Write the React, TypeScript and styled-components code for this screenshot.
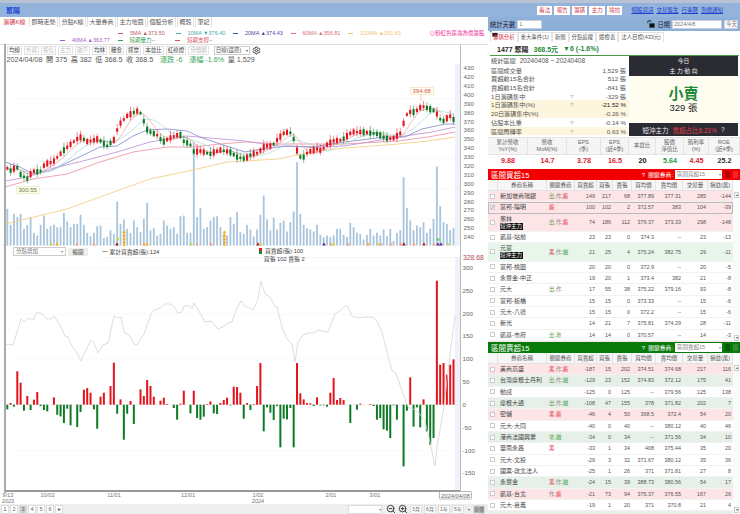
import React from "react";
import styled, { createGlobalStyle } from "styled-components";
import { Settings, ZoomIn, ZoomOut } from "lucide-react";

const GlobalStyle = createGlobalStyle`
  html, body { margin: 0; padding: 0; background: #fff; }
  body { font-family: "Liberation Sans", "Noto Sans CJK TC", sans-serif; color: #333; }
  * { box-sizing: border-box; }
`;

// ---------- chart data (page pixels, read off the picture) ----------
const CENTERS: [number, number][] = [
  [7, 169], [10, 172], [17, 168], [20, 175], [27, 180], [33, 172], [40, 173], [45, 165], [53, 163], [63, 152], [72, 144], [80, 138],
  [88, 143], [98, 140], [107, 147], [115, 140], [117, 132], [118, 127], [127, 117], [137, 112], [142, 115], [145, 127], [148, 132],
  [157, 136], [163, 143], [170, 139], [180, 135], [183, 142], [190, 145], [194, 153], [200, 152], [210, 155], [220, 151], [230, 153],
  [237, 158], [245, 160], [252, 155], [258, 154], [265, 147], [272, 147], [278, 140], [285, 133], [292, 134], [298, 155], [302, 160],
  [308, 153], [317, 150], [322, 152], [325, 147], [333, 142], [342, 141], [352, 133], [362, 133], [378, 135], [385, 139], [392, 140],
  [400, 135], [405, 120], [408, 113], [415, 113], [422, 107], [435, 112], [442, 123], [450, 117], [455, 122],
];
const MA120 = "5,225 67,210 100,198 150,180 193,171 227,163 245,162 278,160 312,153 345,149 398,145 428,142 455,138";
const MA60 = "5,188 33,180 67,175 100,163 133,153 167,148 193,148 220,145 245,143 278,145 312,145 345,145 398,142 428,138 455,133";
const MA40 = "5,182 27,178 50,170 83,162 117,153 150,143 187,137 245,142 278,147 312,148 345,147 398,138 432,133 455,128";
const MA20 = "5,163 20,168 33,175 50,172 75,160 100,148 117,147 133,137 147,131 167,130 187,132 200,138 220,145 245,153 262,150 288,147 312,148 345,143 385,138 405,138 422,130 445,125 455,125";

const VOLUMES = [
  110, 62, 95, 85, 95, 50, 62, 85, 38, 30, 62, 90, 50, 58, 62, 55, 55, 98, 72, 55, 65, 65, 92, 62, 38, 28, 38, 58, 60, 22, 25, 45, 35, 132, 65,
  78, 50, 38, 75, 55, 40, 80, 128, 45, 52, 30, 35, 75, 60, 50, 55, 35, 88, 90, 38, 38, 310, 85, 112, 50, 55, 75, 85, 88, 55, 35, 30, 85, 65, 100,
  40, 35, 62, 48, 27, 48, 92, 150, 78, 45, 84, 48, 68, 75, 42, 70, 102, 250, 95, 62, 52, 48, 42, 62, 32, 25, 30, 25, 30, 50, 50, 32, 26, 68, 55,
  38, 34, 18, 32, 50, 30, 38, 30, 48, 28, 50, 14, 38, 46, 205, 112, 75, 46, 60, 55, 70, 38, 50, 80, 237, 118, 70, 65, 46, 52,
];
const NET = [
  -14, 5, -6, 100, 66, -18, 26, -16, 15, 38, -4, -16, -20, 0, 22, -30, -35, -55, -12, -62, 0, -67, -22, 45, 50, 36, -14, -72, 24, 36, 0, 56, 126,
  -27, 16, -105, -27, 11, -58, 0, 46, 26, 74, 56, 24, 0, 12, 21, 2, 0, -10, -45, 3, 42, 0, -26, 42, -40, -45, -36, 2, 10, -26, -28, 5, 14, 21, -2,
  54, 53, 36, -42, 5, -16, 2, 56, 125, -80, -8, -24, -46, -4, -128, -42, -44, -10, -128, 125, 34, 16, 5, 4, -4, 22, -2, -2, -6, 36, 80, 14, 20, 14,
  0, -55, 0, -15, 3, 0, 0, 2, -4, -45, -40, -74, -78, -100, -2, -45, 0, -185, -18, 82, -66, -8, -68, 16, -80, -120, -100, 372, 120, 125, 90, 120, 136,
];
const NET_LINE = "5,345 13,346 21,320 24,323 28,319 33,321 37,313 42,315 47,320 51,320 54,317 60,326 65,337 68,338 72,347 76,352 81,362 85,353 91,341 94,344 98,354 103,346 108,344 114,317 117,319 121,318 124,333 130,337 135,346 137,346 144,335 151,315 154,311 160,309 165,305 170,305 174,307 178,314 182,313 184,307 190,307 192,310 194,304 200,314 205,323 211,322 218,330 224,327 228,324 232,323 237,309 241,302 245,308 248,308 253,311 258,300 261,282 265,295 270,298 275,308 277,308 282,328 287,340 292,345 295,363 298,343 303,336 308,334 314,334 318,331 323,332 328,333 335,315 340,312 345,307 348,308 352,317 358,319 365,318 373,318 377,322 382,333 387,353 392,372 395,373 398,380 403,395 408,408 413,410 418,413 425,422 430,443 435,467 437,447 442,420 445,400 447,380 455,317";

const SIGNALS: [number, string][] = [
  [5, "#f7a090"], [51, "#b5d85a"], [57, "#f5b020"], [77, "#f7a090"], [94, "#f7a090"], [117, "#a01818"], [144, "#f5a060"], [147, "#f5b020"],
  [191, "#b5d85a"], [197, "#f7a090"], [211, "#f7a090"], [258, "#cc2020"], [261, "#c8d850"], [324, "#6b2a8a"], [331, "#f5a060"], [334, "#c8d850"],
  [348, "#f7a090"], [368, "#f5b020"], [378, "#c8d850"], [381, "#f7a090"], [391, "#f7a090"], [401, "#f7a090"], [404, "#a01818"], [414, "#f7a090"],
  [424, "#cc2020"], [434, "#f7a090"], [438, "#6b2a8a"], [441, "#6b2a8a"], [448, "#c8d850"],
];

const barX = (i: number) => 7.3 + i * 3.33;
const centerAt = (x: number) => {
  for (let i = 1; i < CENTERS.length; i++) {
    const [x0, y0] = CENTERS[i - 1];
    const [x1, y1] = CENTERS[i];
    if (x <= x1) return y0 + ((y1 - y0) * (x - x0)) / (x1 - x0);
  }
  return CENTERS[CENTERS.length - 1][1];
};
const CLOSES = VOLUMES.map((_, i) => centerAt(barX(i)));
const movingAverage = (n: number) =>
  CLOSES.map((_, i) => {
    const part = CLOSES.slice(Math.max(0, i - n + 1), i + 1);
    return `${barX(i).toFixed(1)},${(part.reduce((a, b) => a + b, 0) / part.length).toFixed(1)}`;
  }).join(" ");

// ---------- layout ----------
const Page = styled.div`
  width: 740px;
  height: 514px;
  overflow: hidden;
  display: flex;
  flex-direction: column;
`;
const TitleBar = styled.header`
  height: 17px;
  flex: none;
  border-top: 3px solid #b7c3d4;
  background: #93b3da;
  display: flex;
  align-items: center;
  padding: 0 6px;
`;
const StockName = styled.span`
  color: #1a3fd8;
  font-size: 7px;
  font-weight: bold;
`;
const TitleActions = styled.div`
  margin-left: auto;
  display: flex;
  gap: 2px;
  margin-right: 9px;
`;
const TitleButton = styled.span`
  background: #fff;
  color: #c8384c;
  font-size: 5.5px;
  line-height: 9px;
  text-align: center;
  width: 15.5px;
  white-space: nowrap;
`;
const TitleLinks = styled.div`
  display: flex;
  gap: 3px;
  margin-right: 11px;
`;
const TitleLink = styled.span`
  color: #1b3fd0;
  font-size: 5.5px;
  text-decoration: underline;
  white-space: nowrap;
`;
const Body = styled.div`
  flex: 1;
  display: flex;
  min-height: 0;
`;
const LeftPane = styled.section`
  width: 488px;
  flex: none;
  display: flex;
  flex-direction: column;
`;
const TabRow = styled.nav`
  height: 10px;
  flex: none;
  display: flex;
  gap: 1px;
  padding-left: 1px;
`;
const Tab = styled.span<{ $active?: boolean }>`
  color: ${(p) => (p.$active ? "#d8333f" : "#555")};
  font-size: 6px;
  line-height: 10px;
  padding: 0 1.5px;
  border: 1px solid ${(p) => (p.$active ? "transparent" : "#e0e0e0")};
  border-width: 0 1px;
  white-space: nowrap;
`;
const Legend = styled.div`
  height: 17px;
  flex: none;
  padding-top: 2px;
`;
const LegendLine = styled.div<{ $indent: number }>`
  height: 7px;
  display: flex;
  align-items: center;
  padding-left: ${(p) => p.$indent}px;
`;
const LegendItem = styled.span<{ $color: string }>`
  width: 57.5px;
  flex: none;
  color: ${(p) => p.$color};
  font-size: 5.5px;
  white-space: nowrap;
  &::before {
    content: "";
    display: inline-block;
    width: 5px;
    height: 1px;
    background: currentColor;
    vertical-align: middle;
    margin-right: 7px;
  }
`;
const PinkNote = styled.span`
  color: #f02e9a;
  font-size: 5.5px;
  margin-left: 24px;
  white-space: nowrap;
`;
const LockIcon = styled.svg`
  margin-left: 5px;
  flex: none;
`;
const ChartFrame = styled.div`
  flex: 1;
  position: relative;
  display: flex;
  flex-direction: column;
  border-top: 1px solid #ddd;
  min-height: 0;
  &::before {
    content: "";
    position: absolute;
    left: 4px;
    top: -1px;
    height: 449px;
    width: 1.5px;
    background: #aaa;
  }
  &::after {
    content: "";
    position: absolute;
    left: 460px;
    top: 0;
    height: 447px;
    width: 1px;
    background: #bbb;
  }
`;
const ChartToolbar = styled.div`
  height: 11px;
  flex: none;
  display: flex;
  align-items: center;
  gap: 2px;
  padding-left: 7px;
`;
const ToolButton = styled.span<{ $muted?: boolean }>`
  height: 9px;
  border: 1px solid #e2e2e2;
  color: ${(p) => (p.$muted ? "#bbb" : "#444")};
  font-size: 5.5px;
  line-height: 7px;
  padding: 0 1px;
  white-space: nowrap;
`;
const ToolSelect = styled.span`
  height: 9px;
  width: 36px;
  margin-left: 3px;
  border: 1px solid #ccc;
  color: #555;
  font-size: 5.5px;
  line-height: 7px;
  padding-left: 1px;
  position: relative;
  &::after {
    content: "▾";
    position: absolute;
    right: 1px;
    font-size: 4px;
  }
`;
const InfoLine = styled.div`
  height: 8px;
  flex: none;
  padding-left: 6.5px;
  display: flex;
  gap: 3.5px;
  font-size: 7.2px;
  line-height: 8px;
  color: #555;
  white-space: nowrap;
`;
const GreenText = styled.span`
  color: #3aa65a;
  margin-left: 3px;
`;
const PriceSvg = styled.svg`
  display: block;
  flex: none;
`;
const SubControls = styled.div`
  height: 11px;
  flex: none;
  display: flex;
  align-items: center;
  padding-left: 13px;
`;
const SubSelect = styled.span`
  width: 53px;
  height: 8.5px;
  border: 1px solid #ccc;
  font-size: 5.5px;
  line-height: 7px;
  color: #777;
  padding-left: 2px;
  position: relative;
  &::after {
    content: "▾";
    position: absolute;
    right: 2px;
    font-size: 4px;
  }
`;
const SubButton = styled.span`
  width: 20px;
  height: 8px;
  margin-left: 2px;
  background: #eee;
  font-size: 5.5px;
  line-height: 8px;
  text-align: center;
  color: #444;
`;
const SubLegend = styled.span`
  font-size: 5.8px;
  color: #444;
  margin-left: 14px;
`;
const TradeDot = styled.span`
  display: inline-block;
  width: 3px;
  height: 6px;
  background: linear-gradient(#d22 50%, #1a8a2a 50%);
  margin-right: 3px;
  vertical-align: -1px;
`;
const TradeLegend = styled.span`
  position: absolute;
  left: 259px;
  top: 203px;
  font-size: 5.8px;
  line-height: 7.8px;
  color: #444;
  white-space: nowrap;
`;
const PeakLabel = styled.span`
  position: absolute;
  left: 463px;
  top: 209px;
  font-size: 6.8px;
  line-height: 8px;
  color: #b04848;
`;
const BottomBar = styled.footer`
  height: 10px;
  flex: none;
  background: #eee;
  display: flex;
  align-items: flex-start;
  padding: 0.5px 0 0 1px;
  gap: 1px;
`;
const PageNum = styled.span<{ $active?: boolean }>`
  width: 8px;
  height: 9px;
  text-align: center;
  background: ${(p) => (p.$active ? "#ccc" : "#fff")};
  border: 1px solid #ddd;
  color: #666;
  font-size: 5.6px;
  line-height: 7px;
`;
const BottomRight = styled.div`
  margin-left: auto;
  display: flex;
  align-items: flex-start;
  gap: 2px;
  margin-right: 3px;
`;
const RangeInput = styled.span`
  width: 34px;
  height: 9px;
  margin-right: 2px;
  background: #fff;
  border: 1px solid #ddd;
  color: #888;
  font-size: 4px;
  line-height: 7px;
  text-align: right;
`;
const IconSlot = styled.span`
  width: 10px;
  height: 9px;
  display: flex;
  align-items: center;
  justify-content: center;
  color: #222;
`;
const RangeButton = styled.span<{ $strong?: boolean }>`
  height: 9px;
  width: 12px;
  text-align: center;
  background: ${(p) => (p.$strong ? "#bbb" : "#fff")};
  border: 1px solid #ddd;
  color: #666;
  font-size: 5px;
  line-height: 7px;
`;
const RangeCaret = styled.span`
  width: 5px;
  color: #666;
  font-size: 4px;
  line-height: 9px;
  text-align: center;
`;

// ---------- right pane ----------
const RightPane = styled.aside`
  flex: 1;
  min-width: 0;
  display: flex;
  flex-direction: column;
`;
const StatBar = styled.div`
  height: 14px;
  flex: none;
  background: #8db0d8;
  display: flex;
  align-items: center;
  padding: 0 2px;
  gap: 2px;
  font-size: 6.3px;
  color: #223;
`;
const FieldBox = styled.span<{ $w: number }>`
  width: ${(p) => p.$w}px;
  height: 9px;
  background: #fff;
  border: 1px solid #ccd;
  font-size: 5.5px;
  line-height: 7px;
  color: #777;
  padding-left: 1px;
`;
const Spacer = styled.span`
  flex: 1;
`;
const RightTabs = styled.nav`
  height: 11px;
  flex: none;
  display: flex;
  padding: 1px 0 0 2px;
`;
const RightTab = styled.span<{ $active?: boolean }>`
  font-size: 5.4px;
  line-height: 9px;
  padding: 0 2px;
  border: 1px solid #e2e2e2;
  border-bottom: 0;
  white-space: nowrap;
  color: ${(p) => (p.$active ? "#d8333f" : "#555")};
`;
const QuoteLine = styled.div`
  height: 14px;
  flex: none;
  margin: 0 1px 0 2px;
  border-bottom: 1.5px solid #4a9a4a;
  display: flex;
  align-items: center;
  padding-left: 7px;
  font-size: 7px;
  font-weight: bold;
  color: #222;
  white-space: nowrap;
`;
const QuotePrice = styled.span`
  color: #1f8a3a;
  margin-left: 5px;
`;
const StatsArea = styled.div`
  height: 80px;
  flex: none;
  display: flex;
  margin-left: 2px;
`;
const StatsList = styled.div`
  width: 139px;
  flex: none;
  padding-top: 1px;
`;
const StatsHeadRow = styled.div`
  height: 8.7px;
  padding-left: 1px;
  line-height: 8.7px;
  font-size: 6.2px;
  color: #555;
  white-space: nowrap;
`;
const StatsRange = styled.span`
  font-size: 6.5px;
  margin-left: 4px;
`;
const StatsRow = styled.div<{ $hl?: boolean }>`
  height: 8.7px;
  display: grid;
  grid-template-columns: 79px 1fr auto;
  align-items: center;
  padding: 0 3px 0 1px;
  background: ${(p) => (p.$hl ? "#fdf6dc" : "transparent")};
  font-size: 6.2px;
  color: #555;
  white-space: nowrap;
`;
const StatsMark = styled.span`
  color: #aaa;
`;
const StatsValue = styled.span<{ $strong?: boolean }>`
  color: ${(p) => (p.$strong ? "#222" : "#555")};
`;
const DirectionCard = styled.div`
  flex: 1;
  margin-right: 2px;
  display: flex;
  flex-direction: column;
  background: #fffdf0;
`;
const CardHead = styled.div`
  height: 20px;
  flex: none;
  background: #2b2b33;
  color: #eee;
  font-size: 5.8px;
  line-height: 9.5px;
  text-align: center;
  padding-top: 1px;
`;
const CardBody = styled.div`
  flex: 1;
  display: flex;
  flex-direction: column;
  align-items: center;
  justify-content: center;
`;
const CardBig = styled.div`
  color: #1f8a3a;
  font-size: 15px;
  line-height: 17px;
  font-weight: bold;
`;
const CardSub = styled.div`
  font-size: 9.5px;
  line-height: 12px;
  color: #222;
`;
const CardFoot = styled.div`
  height: 13px;
  flex: none;
  background: #2b2b33;
  color: #eee;
  font-size: 6.5px;
  display: flex;
  align-items: center;
  justify-content: center;
  gap: 4px;
  white-space: nowrap;
`;
const Warn = styled.span`
  color: #e8404a;
`;
const MetricGrid = styled.div`
  height: 29px;
  flex: none;
  display: grid;
  grid-template-columns: 40px 39px 34px 28px 27px 28px 25px 31px;
  grid-template-rows: 18px 11px;
  margin: 1px 0 3px;
`;
const MetricHead = styled.div`
  background: #f5f5f5;
  border: 1px solid #e4e4e4;
  border-width: 1px 1px 1px 0;
  color: #666;
  font-size: 5.5px;
  line-height: 7.5px;
  text-align: center;
  display: flex;
  align-items: center;
  justify-content: center;
`;
const MetricValue = styled.div<{ $color: string }>`
  color: ${(p) => p.$color};
  font-size: 7.2px;
  font-weight: bold;
  line-height: 11px;
  text-align: center;
`;
const PanelBar = styled.div<{ $bg: string }>`
  height: 11px;
  flex: none;
  background: ${(p) => p.$bg};
  color: #fff;
  display: flex;
  align-items: center;
  padding: 0 2px 0 3px;
  font-size: 5.8px;
  white-space: nowrap;
`;
const PanelTitle = styled.span`
  font-size: 7.5px;
`;
const PanelSelect = styled.span`
  width: 47px;
  height: 9px;
  background: #fff;
  color: #888;
  font-size: 5.5px;
  line-height: 9px;
  padding-left: 2px;
  margin-left: 2px;
  position: relative;
  &::after {
    content: "▾";
    position: absolute;
    right: 1px;
    font-size: 4px;
  }
`;
const PanelSquare = styled.span<{ $bg: string }>`
  width: 5px;
  height: 7px;
  margin-left: 3px;
  background: ${(p) => p.$bg};
`;
const GRID = "10px 49px 28px 22px 16px 19px 24px 27px 25px 25px";
const HeadRow = styled.div`
  height: 11px;
  flex: none;
  width: 245px;
  display: grid;
  grid-template-columns: ${GRID};
  background: #f6f6f6;
`;
const HeadCell = styled.div`
  border: 1px solid #e2e2e2;
  border-width: 0 1px 1px 0;
  color: #555;
  font-size: 5.5px;
  line-height: 10px;
  text-align: center;
  white-space: nowrap;
`;
const Rows = styled.div<{ $h: number }>`
  height: ${(p) => p.$h}px;
  flex: none;
  position: relative;
  overflow: hidden;
`;
const TONES: Record<string, string> = { pink: "#fde4e6", green: "#e8f5ea", sage: "#e7f0e8", none: "#fff" };
const Row = styled.div<{ $tone: string; $tall?: boolean; $boxed?: boolean }>`
  width: 245px;
  height: ${(p) => (p.$tall ? 18.3 : 11.33)}px;
  display: grid;
  grid-template-columns: ${GRID};
  background: ${(p) => TONES[p.$tone]};
  border-bottom: 1px solid ${(p) => (p.$boxed ? "#aaa" : "#f2f2f2")};
  ${(p) => (p.$boxed ? "outline: 1px solid #bbb; outline-offset: -1px;" : "")}
  align-items: center;
  font-size: 5.6px;
  color: #555;
`;
const CheckCell = styled.span<{ $on?: boolean }>`
  width: 5px;
  height: 5px;
  margin-left: 2px;
  background: #fff;
  border: 1px solid #ccc;
  font-size: 4.5px;
  line-height: 4px;
  color: #333;
`;
const NameCell = styled.div`
  padding-left: 2px;
  font-size: 6px;
  line-height: 8px;
  color: #444;
  white-space: nowrap;
  overflow: hidden;
`;
const ShortBadge = styled.span`
  display: block;
  width: 23px;
  background: #111;
  color: #fff;
  font-size: 5.5px;
  line-height: 7px;
`;
const KeyCell = styled.div`
  padding-left: 2px;
  font-size: 5.4px;
  white-space: nowrap;
`;
const KeyMark = styled.span<{ $c: string }>`
  color: ${(p) => p.$c};
`;
const NumCell = styled.div`
  text-align: right;
  padding-right: 2px;
  white-space: nowrap;
  font-size: 5.4px;
`;
const ScrollTrack = styled.div`
  position: absolute;
  right: 0;
  top: 0;
  bottom: 0;
  width: 7px;
  background: #fbfbfb;
`;
const ScrollArrow = styled.span<{ $down?: boolean }>`
  position: absolute;
  left: 1px;
  right: 1px;
  ${(p) => (p.$down ? "bottom: 1px;" : "top: 1px;")}
  height: 6px;
  background: #fff;
  border: 1px solid #ccc;
  font-size: 4px;
  line-height: 4px;
  text-align: center;
  color: #555;
`;

// ---------- table data ----------
type Broker = {
  name: string; badge?: boolean; keys?: string; net: number; buy: number; sell: number;
  bavg: string; savg: string; vol: number; pnl: number; tone?: string; checked?: boolean;
};
const BUYERS: Broker[] = [
  { name: "新加坡商瑞銀", keys: "出,作,廝", net: 149, buy: 217, sell: 68, bavg: "377.89", savg: "377.31", vol: 285, pnl: -144, tone: "pink" },
  { name: "富邦-陽明", keys: "廝", net: 100, buy: 102, sell: 2, bavg: "372.57", savg: "383", vol: 104, pnl: -39, tone: "pink", checked: true },
  { name: "奧林", badge: true, keys: "出,作,廝", net: 74, buy: 186, sell: 112, bavg: "379.37", savg: "373.33", vol: 298, pnl: -148, tone: "pink" },
  { name: "凱基-站前", net: 23, buy: 23, sell: 0, bavg: "374.3", savg: "--", vol: 23, pnl: -13 },
  { name: "元富", badge: true, keys: "黑,作,融", net: 21, buy: 25, sell: 4, bavg: "375.24", savg: "382.75", vol: 29, pnl: -11, tone: "green" },
  { name: "富邦-桃園", net: 20, buy: 20, sell: 0, bavg: "372.9", savg: "--", vol: 20, pnl: -5 },
  { name: "永豐金-中正", net: 19, buy: 20, sell: 1, bavg: "373.4", savg: "382", vol: 21, pnl: -8 },
  { name: "元大", keys: "出,作", net: 17, buy: 55, sell: 38, bavg: "375.22", savg: "379.16", vol: 93, pnl: -8 },
  { name: "富邦-板橋", net: 15, buy: 15, sell: 0, bavg: "373.33", savg: "--", vol: 15, pnl: -6 },
  { name: "元大-八德", net: 15, buy: 15, sell: 0, bavg: "372.2", savg: "--", vol: 15, pnl: -6 },
  { name: "新光", net: 14, buy: 21, sell: 7, bavg: "375.81", savg: "374.29", vol: 28, pnl: -11 },
  { name: "凱基-市府", keys: "出,地", net: 14, buy: 14, sell: 0, bavg: "370.57", savg: "--", vol: 14, pnl: -3 },
];
const SELLERS: Broker[] = [
  { name: "美商高盛", keys: "黑,作,廝", net: -187, buy: 15, sell: 202, bavg: "374.51", savg: "374.68", vol: 217, pnl: 116, tone: "pink" },
  { name: "台灣摩根士丹利", keys: "出,作,融", net: -129, buy: 23, sell: 152, bavg: "374.83", savg: "372.12", vol: 175, pnl: 41, tone: "sage" },
  { name: "動感", net: -125, buy: 0, sell: 125, bavg: "--", savg: "379.56", vol: 125, pnl: 138 },
  { name: "摩根大通", keys: "出,作,融", net: -108, buy: 47, sell: 155, bavg: "378", savg: "371.82", vol: 202, pnl: 7, tone: "sage" },
  { name: "密儲", keys: "黑,廝", net: -46, buy: 4, sell: 50, bavg: "368.5", savg: "372.4", vol: 54, pnl: 20, tone: "pink" },
  { name: "元大-大同", net: -40, buy: 0, sell: 40, bavg: "--", savg: "380.12", vol: 40, pnl: 46 },
  { name: "港商法國興業", keys: "地,融", net: -34, buy: 0, sell: 34, bavg: "--", savg: "371.56", vol: 34, pnl: 10, tone: "sage" },
  { name: "華南永昌", keys: "黑", net: -33, buy: 1, sell: 34, bavg: "408", savg: "375.44", vol: 35, pnl: 20 },
  { name: "元大-北投", net: -29, buy: 3, sell: 32, bavg: "371.67", savg: "380.12", vol: 35, pnl: 36 },
  { name: "國票-敦北法人", net: -25, buy: 1, sell: 26, bavg: "371", savg: "371.81", vol: 27, pnl: 8 },
  { name: "永豐金", keys: "黑,作,融", net: -24, buy: 15, sell: 39, bavg: "388.73", savg: "380.56", vol: 54, pnl: 17, tone: "sage" },
  { name: "凱基-台北", keys: "作,廝", net: -21, buy: 73, sell: 94, bavg: "375.37", savg: "376.55", vol: 167, pnl: 26, tone: "pink" },
  { name: "元大-嘉義", net: -19, buy: 1, sell: 20, bavg: "371", savg: "370.8", vol: 21, pnl: 4 },
];
const HEADS = ["券商名稱", "關鍵券商", "買賣超", "買張", "賣張", "買均價", "賣均價", "交易量", "損益(萬)"];
const keyColor = (k: string) => (k === "廝" || k === "黑" ? "#e03040" : k === "融" ? "#2a9a40" : k === "作" ? "#888" : "#6a9a4a");

const BrokerRow = ({ row }: { row: Broker }) => (
  <Row $tone={row.tone ?? "none"} $tall={row.badge} $boxed={row.checked}>
    <CheckCell $on={row.checked}>{row.checked ? "✓" : ""}</CheckCell>
    <NameCell>
      {row.name}
      {row.badge && <ShortBadge>短沖主力</ShortBadge>}
    </NameCell>
    <KeyCell>
      {row.keys?.split(",").map((k, i) => (
        <KeyMark key={i} $c={keyColor(k)}>{i > 0 ? "," : ""}{k}</KeyMark>
      ))}
    </KeyCell>
    <NumCell>{row.net}</NumCell>
    <NumCell>{row.buy}</NumCell>
    <NumCell>{row.sell}</NumCell>
    <NumCell>{row.bavg}</NumCell>
    <NumCell>{row.savg}</NumCell>
    <NumCell>{row.vol}</NumCell>
    <NumCell>{row.pnl}</NumCell>
  </Row>
);

const RowPeek = styled.div<{ $tone: string }>`
  width: 245px;
  height: 3px;
  background: ${(p) => TONES[p.$tone]};
`;

const BrokerPanel = ({ title, bg, rows, height, peek }: { title: string; bg: string; rows: Broker[]; height: number; peek: string }) => (
  <>
    <PanelBar $bg={bg}>
      <PanelTitle>{title}</PanelTitle>
      <Spacer />
      <span>? &nbsp;關鍵券商:</span>
      <PanelSelect>{title}</PanelSelect>
      <PanelSquare $bg="rgba(0,0,0,.25)" />
      <PanelSquare $bg="rgba(255,255,255,.15)" />
    </PanelBar>
    <HeadRow>
      <HeadCell />
      {HEADS.map((h) => <HeadCell key={h}>{h}</HeadCell>)}
    </HeadRow>
    <Rows $h={height}>
      {rows.map((r, i) => <BrokerRow key={i} row={r} />)}
      <RowPeek $tone={peek} />
      <ScrollTrack>
        <ScrollArrow>▴</ScrollArrow>
        <ScrollArrow $down>▾</ScrollArrow>
      </ScrollTrack>
    </Rows>
  </>
);

const LockGlyph = ({ size = 8 }: { size?: number }) => (
  <LockIcon width={size} height={size} viewBox="0 0 10 10">
    <path d="M1 4V2.6a2 2 0 0 1 4 0" fill="none" stroke="#111" strokeWidth="1.1" />
    <rect x="3" y="4.2" width="6.5" height="5.3" fill="#111" />
  </LockIcon>
);

const GRID_PRICE = [100, 130, 160, 190, 220];
const PRICE_TICKS = Array.from({ length: 20 }, (_, i) => 430 - i * 10);

const PriceChart = () => (
  <PriceSvg width={488} height={182} viewBox="0 65 488 182">
    {GRID_PRICE.map((y) => <line key={y} x1={16} x2={460} y1={y} y2={y} stroke="#f3f3f3" strokeWidth={0.6} />)}
    <rect x={455} y={65} width={5} height={182} fill="#eef3f9" />
    {VOLUMES.map((v, i) => (
      <rect key={i} x={barX(i) - 0.9} y={246.5 - v / 3} width={1.8} height={v / 3} fill="#a9c4dd" />
    ))}
    {[0, 1].map((k) => (
      <g key={k}>
        {[0, 1, 2, 3, 4].map((j) => (
          <path key={j} d={`M${k ? 224.5 : 124.2} ${245 - j * 3.4}l-2 2.4h1.2v1h1.6v-1h1.2z`} fill="#f5b020" />
        ))}
      </g>
    ))}
    {SIGNALS.map(([x, c], i) => <path key={i} d={`M${x} 243.2l1.8 3.3h-3.6z`} fill={c} />)}
    <circle cx={438} cy={240.5} r={1.6} fill="#5ce05c" />
    <circle cx={117.5} cy={240} r={1.6} fill="#b5e05c" />
    <polyline points={MA120} fill="none" stroke="#f5d08a" strokeWidth={0.9} />
    <polyline points={MA60} fill="none" stroke="#ee9aa8" strokeWidth={0.9} />
    <polyline points={MA40} fill="none" stroke="#c49ad8" strokeWidth={0.9} />
    <polyline points={MA20} fill="none" stroke="#8f94cf" strokeWidth={0.9} />
    <polyline points={movingAverage(10)} fill="none" stroke="#9fdcd6" strokeWidth={0.7} />
    <polyline points={movingAverage(5)} fill="none" stroke="#e8a0a0" strokeWidth={0.7} />
    {CLOSES.map((c, i) => {
      const prev = CLOSES[Math.max(0, i - 1)];
      const up = i % 7 === 3 ? c > prev : c <= prev;
      const h = 2.5 + ((i * 7) % 5) * 0.9;
      const wick = 1.5 + ((i * 3) % 4);
      const color = up ? "#e3141c" : "#0f7a25";
      return (
        <g key={i}>
          <line x1={barX(i)} x2={barX(i)} y1={c - h / 2 - wick} y2={c + h / 2 + wick * 0.7} stroke={color} strokeWidth={0.5} />
          <rect x={barX(i) - 1.05} y={c - h / 2} width={2.1} height={h} fill={color} />
        </g>
      );
    })}
    <rect x={16.5} y={187.5} width={23} height={7} fill="#fdfde8" stroke="#dfe8b8" strokeWidth={0.6} />
    <text x={18.5} y={193.3} fontSize={6} fill="#6a7a5a">300.55</text>
    <line x1={421} x2={421} y1={95} y2={102} stroke="#f0b0a0" strokeWidth={0.6} />
    <rect x={410.5} y={88.5} width={23} height={7} fill="#fffdf5" stroke="#f5d9a8" strokeWidth={0.6} />
    <text x={412.5} y={94.3} fontSize={6} fill="#d05a3a">394.68</text>
    {PRICE_TICKS.map((p) => (
      <text key={p} x={463.5} y={69 + (430 - p) * 0.888 + 2.3} fontSize={6.2} fill="#666">{p}</text>
    ))}
  </PriceSvg>
);

const NET_TICKS = [300, 250, 200, 150, 100, 50, 0, -50, -100, -150];
const DATES: [number, string, string?][] = [
  [8, "9/13", "2023"], [47.5, "10/02"], [114, "11/01"], [188, "12/01"], [258, "1/02", "2024"], [331, "2/01"], [375, "3/01"],
];

const NetChart = () => (
  <PriceSvg width={488} height={247} viewBox="0 258 488 247">
    <line x1={100} x2={460} y1={258} y2={258} stroke="#e6e6f8" strokeWidth={0.8} />
    {[269, 315, 360, 452].map((y) => <line key={y} x1={16} x2={460} y1={y} y2={y} stroke="#f5f5f5" strokeWidth={0.6} />)}
    <rect x={455} y={258} width={5} height={234} fill="#eef3f9" />
    <line x1={5} x2={460} y1={405.7} y2={405.7} stroke="#e4e4e4" strokeWidth={0.6} />
    {NET.map((v, i) => {
      const h = Math.abs(v) / 3;
      return (
        <rect key={i} x={barX(i) - 1} y={v > 0 ? 405.7 - h : 405.7} width={2} height={h} fill={v > 0 ? "#e3141c" : "#0f7a25"} />
      );
    })}
    <polyline points={NET_LINE} fill="none" stroke="#d4d4d4" strokeWidth={0.8} />
    <rect x={4} y={491} width={457} height={2} fill="#999" />
    {NET_TICKS.map((t) => (
      <text key={t} x={462.5} y={405.7 - t * 0.457 + 2.2} fontSize={6.2} fill="#666">{t}</text>
    ))}
    {DATES.map(([x, a, b]) => (
      <g key={a}>
        <text x={x} y={498} fontSize={5.6} fill="#777" textAnchor="middle">{a}</text>
        {b && <text x={x} y={504} fontSize={5.6} fill="#777" textAnchor="middle">{b}</text>}
      </g>
    ))}
    <rect x={439.5} y={492.5} width={32} height={7.5} fill="#fff" stroke="#888" strokeWidth={0.6} rx={0.8} />
    <text x={455.5} y={498.5} fontSize={5.8} fill="#666" textAnchor="middle">2024/04/08</text>
  </PriceSvg>
);

const LEGEND_TOP = [
  { c: "#b86060", t: "5MA ▲373.50" }, { c: "#49aaa8", t: "10MA ▼376.40" }, { c: "#4a4aa8", t: "20MA ▲374.43" },
  { c: "#e26a7a", t: "60MA ▲356.81" }, { c: "#f3c27a", t: "120MA ▲351.63" },
];
const LEGEND_SUB = [
  { c: "#a062c2", t: "40MA ▲363.77" }, { c: "#3a9a50", t: "短期量力--" }, { c: "#d85060", t: "短期支撐--" },
];
const TOOLS: [string, boolean?][] = [
  ["均線"], ["外資", true], ["投信", true], ["主力", true], ["散戶", true], ["均林"], ["糧食"], ["擇當"], ["本益比"], ["紅綠燈"], ["分價額", true],
];
const STATS: { l: string; q?: number; v?: string; hl?: boolean; s?: boolean }[] = [
  { l: "區間成交量", v: "1,529 張" }, { l: "買超前15名合計", v: "512 張" }, { l: "賣超前15名合計", v: "-841 張" },
  { l: "1日籌碼集中", q: 1, v: "-329 張" }, { l: "1日籌碼集中(%)", q: 1, v: "-21.52 %", hl: true, s: true },
  { l: "20日籌碼集中(%)", v: "-0.26 %", hl: true }, { l: "佔股本比重", q: 2, v: "-0.14 %" }, { l: "區間周轉率", q: 2, v: "0.63 %", hl: true },
];
const METRICS: [string, string, string, string][] = [
  ["累計營收", "YoY(%)", "9.88", "#e0202c"], ["營收", "MoM(%)", "14.7", "#e0202c"], ["EPS", "(季)", "3.78", "#e0202c"], ["EPS", "(近4季)", "16.5", "#e0202c"],
  ["本益比", "", "20", "#111"], ["股價", "淨值比", "5.64", "#1f9a3f"], ["殖利率", "(%)", "4.45", "#e0202c"], ["ROE", "(近4季)", "25.2", "#333"],
];

const App = () => (
  <Page>
    <GlobalStyle />
    <TitleBar>
      <StockName>聚陽</StockName>
      <TitleActions>
        {["看法", "報告", "籌碼", "主力", "啥拉"].map((t) => <TitleButton key={t}>{t}</TitleButton>)}
      </TitleActions>
      <TitleLinks>
        {["個股資訊", "交易醫生", "行事曆", "到價通知"].map((t) => <TitleLink key={t}>{t}</TitleLink>)}
      </TitleLinks>
    </TitleBar>
    <Body>
      <LeftPane>
        <TabRow>
          {["籌碼K線", "即時走勢", "分點K線", "大量券商", "主力地圖", "個股分析", "概殼", "筆記"].map((t, i) => (
            <Tab key={t} $active={i === 0}>{t}</Tab>
          ))}
        </TabRow>
        <Legend>
          <LegendLine $indent={118}>
            {LEGEND_TOP.map((l) => <LegendItem key={l.t} $color={l.c}>{l.t}</LegendItem>)}
            <PinkNote>⊙粉紅色區塊為億籌股</PinkNote>
            <LockGlyph />
          </LegendLine>
          <LegendLine $indent={60}>
            {LEGEND_SUB.map((l) => <LegendItem key={l.t} $color={l.c}>{l.t}</LegendItem>)}
          </LegendLine>
        </Legend>
        <ChartFrame>
          <ChartToolbar>
            {TOOLS.map(([t, m]) => <ToolButton key={t} $muted={m}>{t}</ToolButton>)}
            <ToolSelect>日線(還原)</ToolSelect>
            <Settings size={9} color="#333" strokeWidth={2.4} />
          </ChartToolbar>
          <InfoLine>
            <span>2024/04/08</span><span>開 375</span><span>高 382</span><span>低 368.5</span><span>收 368.5</span>
            <GreenText>漲跌 -6</GreenText><GreenText>漲幅 -1.6%</GreenText><span>量 1,529</span>
          </InfoLine>
          <PriceChart />
          <SubControls>
            <SubSelect>分點增加</SubSelect>
            <SubButton>縮圖</SubButton>
            <SubLegend>一 累計買賣超(張):124</SubLegend>
          </SubControls>
          <TradeLegend><TradeDot />買賣超(張):100<br />&nbsp;&nbsp;&nbsp;買張 102 賣張 2</TradeLegend>
          <PeakLabel>328.68</PeakLabel>
          <NetChart />
          <BottomBar>
            {[1, 2, 3, 4, 5, 6].map((n) => <PageNum key={n} $active={n === 3}>{n}</PageNum>)}
            <PageNum>▸</PageNum>
            <BottomRight>
              <RangeInput>▾</RangeInput>
              <IconSlot><ZoomOut size={10} /></IconSlot>
              <IconSlot><ZoomIn size={10} /></IconSlot>
              {["3月", "6月", "1年", "5年"].map((t) => <RangeButton key={t}>{t}</RangeButton>)}
              <RangeCaret>▾</RangeCaret>
              <RangeButton $strong>查價</RangeButton>
            </BottomRight>
          </BottomBar>
        </ChartFrame>
      </LeftPane>
      <RightPane>
        <StatBar>
          統計天數
          <FieldBox $w={25}>1</FieldBox>
          <Spacer />
          <LockGlyph />
          日期
          <FieldBox $w={50}>2024/4/8</FieldBox>
          <FieldBox $w={14}>今天</FieldBox>
        </StatBar>
        <RightTabs>
          {["籌碼分析", "重大事件(1)", "新聞", "分點追蹤", "體檢表", "法人目標(433元)"].map((t, i) => (
            <RightTab key={t} $active={i === 0}>{t}</RightTab>
          ))}
        </RightTabs>
        <QuoteLine>
          1477 聚陽<QuotePrice>368.5元</QuotePrice><QuotePrice>▼6 (-1.6%)</QuotePrice>
        </QuoteLine>
        <StatsArea>
          <StatsList>
            <StatsHeadRow>統計區間<StatsRange>20240408 ~ 20240408</StatsRange></StatsHeadRow>
            {STATS.map((s) => (
              <StatsRow key={s.l} $hl={s.hl}>
                <span>{s.l}</span>
                <StatsMark>{s.q ? "?" : ""}</StatsMark>
                <StatsValue $strong={s.s}>{s.v}</StatsValue>
              </StatsRow>
            ))}
          </StatsList>
          <DirectionCard>
            <CardHead>今日<br />主 力 動 向</CardHead>
            <CardBody>
              <CardBig>小賣</CardBig>
              <CardSub>329 張</CardSub>
            </CardBody>
            <CardFoot>短沖主力 <Warn>賣超占比6.21%</Warn> ?</CardFoot>
          </DirectionCard>
        </StatsArea>
        <MetricGrid>
          {METRICS.map(([a, b]) => (
            <MetricHead key={a + b}><span>{a}{b && <br />}{b}</span></MetricHead>
          ))}
          {METRICS.map(([a, b, v, c]) => <MetricValue key={a + b} $color={c}>{v}</MetricValue>)}
        </MetricGrid>
        <BrokerPanel title="區間買超15" bg="#f00000" rows={BUYERS} height={151} peek="pink" />
        <BrokerPanel title="區間賣超15" bg="#087a0a" rows={SELLERS} height={150} peek="sage" />
      </RightPane>
    </Body>
  </Page>
);

export default App;
